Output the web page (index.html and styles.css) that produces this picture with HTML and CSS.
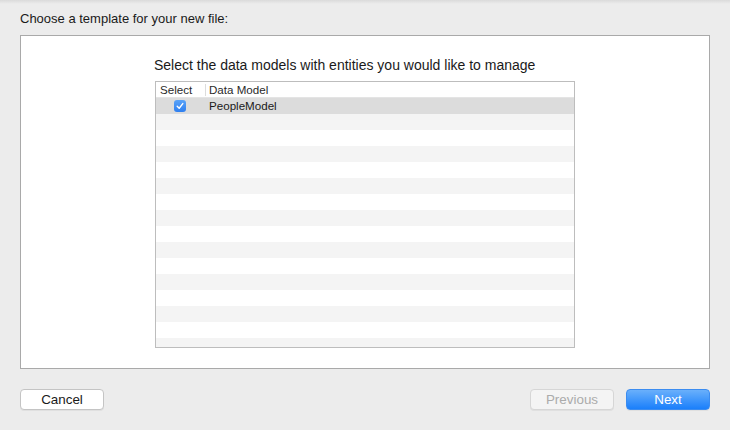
FILE: index.html
```html
<!DOCTYPE html>
<html lang="en">
<head>
    <meta charset="UTF-8">
    <title>New File</title>
    <link rel="stylesheet" href="styles.css">
</head>
<body>

<div class="sheet">
    <div class="sheet-title">Choose a template for your new file:</div>

    <div class="panel">
        <div class="chooser">
            <div class="chooser-title">Select the data models with entities you would like to manage</div>

            <div class="list">
                <div class="list-head">
                    <div class="col-select">Select</div>
                    <div class="col-model">Data Model</div>
                </div>
                <div class="list-body">
                    <div class="row selected">
                        <div class="col-select">
                            <span class="check">
                                <svg width="8" height="8" viewBox="0 0 8 8"><path d="M1.2 4.2 L3.2 6.2 L6.8 1.6" fill="none" stroke="#fff" stroke-width="1.4" stroke-linecap="round" stroke-linejoin="round"/></svg>
                            </span>
                        </div>
                        <div class="col-model">PeopleModel</div>
                    </div>
                    <div class="row"></div>
                    <div class="row"></div>
                    <div class="row"></div>
                    <div class="row"></div>
                    <div class="row"></div>
                    <div class="row"></div>
                    <div class="row"></div>
                    <div class="row"></div>
                    <div class="row"></div>
                    <div class="row"></div>
                    <div class="row"></div>
                    <div class="row"></div>
                    <div class="row"></div>
                    <div class="row"></div>
                    <div class="row"></div>
                </div>
            </div>
        </div>
    </div>

    <div class="actions">
        <button class="btn">Cancel</button>
        <div class="actions-right">
            <button class="btn disabled">Previous</button>
            <button class="btn primary">Next</button>
        </div>
    </div>
</div>

</body>
</html>
```

FILE: styles.css
```css
* {
    box-sizing: border-box;
    margin: 0;
    padding: 0;
}

body {
    background-color: #ECECEC;
    font-family: 'Liberation Sans', Arial, sans-serif;
    color: #1A1A1A;
    width: 730px;
    height: 430px;
    overflow: hidden;
    background-image: linear-gradient(to bottom, #DADADA 0, #ECECEC 4px);
}

.sheet {
    padding: 11px 20px 0 20px;
}

.sheet-title {
    font-size: 13px;
    line-height: 16px;
    height: 24px;
}

.panel {
    height: 334px;
    background: #FFFFFF;
    border: 1px solid #A9A9A9;
    display: flex;
    justify-content: center;
}

.chooser {
    width: 420px;
    padding-top: 21px;
}

.chooser-title {
    font-size: 14px;
    line-height: 16px;
    margin-left: -1px;
    margin-bottom: 8px;
}

.list {
    height: 267px;
    border: 1px solid #BDBDBD;
    overflow: hidden;
    font-size: 11.6px;
}

.list-head {
    display: flex;
    height: 16px;
    line-height: 15px;
    color: #2A2A2A;
    border-bottom: 1px solid #E4E4E4;
    background: #FFFFFF;
}

.list-head .col-model {
    border-left: 1px solid #DCDCDC;
    padding-left: 3px;
    margin-top: 2px;
    line-height: 12px;
    height: 12px;
}

.list-head .col-select {
    padding-left: 4px;
}

.col-select {
    width: 49px;
}

.col-model {
    flex: 1;
}

.row {
    display: flex;
    height: 16px;
    line-height: 16px;
}

.row:nth-child(even) {
    background: #F4F4F4;
}

.row.selected {
    background: #DCDCDC;
}

.row .col-model {
    padding-left: 4px;
}

.row .col-select {
    display: flex;
    justify-content: center;
    align-items: center;
}

.check {
    width: 12px;
    height: 12px;
    border-radius: 3px;
    background: linear-gradient(to bottom, #5AA3F8, #2E7FF0);
    display: flex;
    justify-content: center;
    align-items: center;
    margin-left: -1px;
}

.actions {
    display: flex;
    justify-content: space-between;
    margin-top: 20px;
}

.actions-right {
    display: flex;
    gap: 12px;
}

.btn {
    width: 84px;
    height: 21px;
    font-family: 'Liberation Sans', Arial, sans-serif;
    font-size: 13.4px;
    color: #1A1A1A;
    background: #FFFFFF;
    border: 1px solid #C4C4C4;
    border-radius: 4px;
    box-shadow: 0 1px 0 rgba(0, 0, 0, 0.05);
}

.btn.disabled {
    color: #ABABAB;
    background: #F4F4F4;
    border-color: #D6D6D6;
}

.btn.primary {
    color: #FFFFFF;
    background: linear-gradient(to bottom, #6AB0FB, #1A7FFB);
    border-color: #3B8CF0;
}
```
